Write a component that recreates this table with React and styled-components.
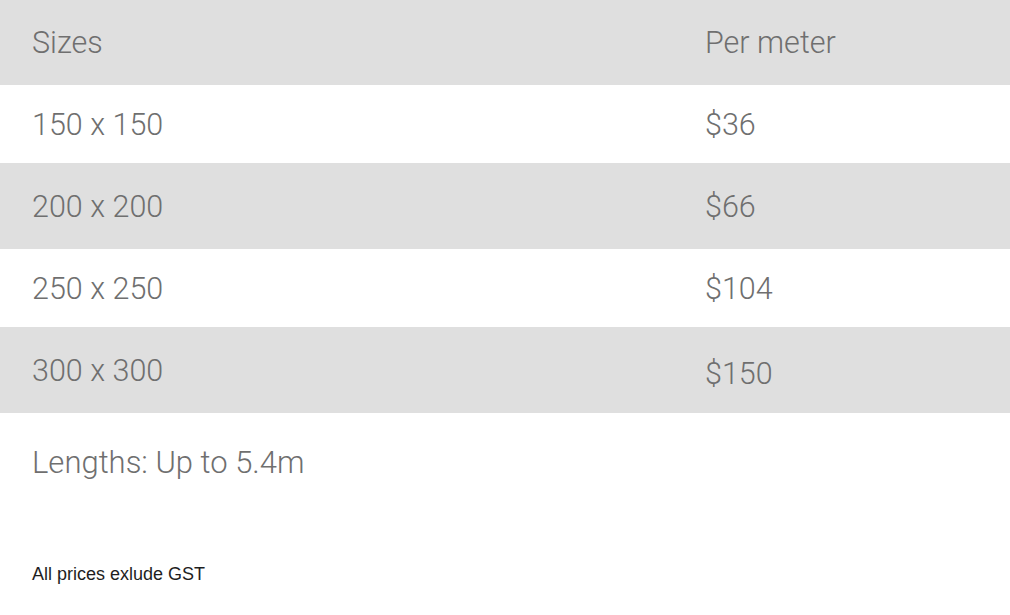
import React from 'react'
import styled, { createGlobalStyle } from 'styled-components'

const GlobalStyle = createGlobalStyle`
  body {
    margin: 0;
    background: #ffffff;
    font-family: Roboto, "Liberation Sans", sans-serif;
  }
`

const rows = [
  { size: '150 x 150', price: '$36' },
  { size: '200 x 200', price: '$66' },
  { size: '250 x 250', price: '$104' },
  { size: '300 x 300', price: '$150', drop: 6 },
]

const App = () => (
  <Page>
    <GlobalStyle />
    <Table>
      <Row shaded tall>
        <Cell>Sizes</Cell>
        <Cell>Per meter</Cell>
      </Row>
      {rows.map((r, i) => (
        <Row key={r.size} shaded={i % 2 === 1} tall={i % 2 === 1}>
          <Cell>{r.size}</Cell>
          <Cell drop={r.drop}>{r.price}</Cell>
        </Row>
      ))}
    </Table>
    <Lengths>Lengths: Up to 5.4m</Lengths>
    <Note>All prices exlude GST</Note>
  </Page>
)

const Page = styled.div`
  width: 1010px;
  height: 615px;
  overflow: hidden;
`

const Table = styled.div`
  display: flex;
  flex-direction: column;
`

const Row = styled.div`
  display: grid;
  grid-template-columns: 673px 1fr;
  align-items: center;
  padding-left: 32px;
  height: ${p => (p.tall ? 86 : 78)}px;
  background: ${p => (p.shaded ? '#dfdfdf' : '#ffffff')};
  &:first-child {
    height: 85px;
  }
`

const Cell = styled.div`
  font-size: 30.5px;
  font-weight: 300;
  color: #6f6f6f;
  line-height: 1;
  padding-top: ${p => (p.drop || 0) + 2}px;
`

const Lengths = styled.div`
  padding: 35px 0 0 32px;
  font-size: 31px;
  font-weight: 300;
  color: #6f6f6f;
  line-height: 30px;
`

const Note = styled.div`
  padding: 88px 0 0 32px;
  font-family: "Liberation Sans", Arial, sans-serif;
  font-size: 18px;
  color: #1e1e1e;
  line-height: 17px;
`

export default App
